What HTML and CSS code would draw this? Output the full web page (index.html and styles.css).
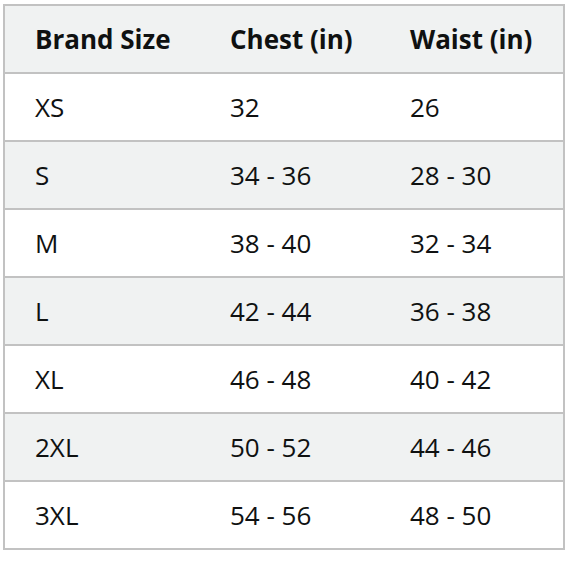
FILE: index.html
```html
<!DOCTYPE html>
<html>
<head>
<meta charset="utf-8">
<link rel="stylesheet" href="styles.css">
</head>
<body>
<table class="size-table">
  <thead>
    <tr><th class="c1">Brand Size</th><th class="c2">Chest (in)</th><th class="c3">Waist (in)</th></tr>
  </thead>
  <tbody>
    <tr><td>XS</td><td>32</td><td>26</td></tr>
    <tr><td>S</td><td>34 - 36</td><td>28 - 30</td></tr>
    <tr><td>M</td><td>38 - 40</td><td>32 - 34</td></tr>
    <tr><td>L</td><td>42 - 44</td><td>36 - 38</td></tr>
    <tr><td>XL</td><td>46 - 48</td><td>40 - 42</td></tr>
    <tr><td>2XL</td><td>50 - 52</td><td>44 - 46</td></tr>
    <tr><td>3XL</td><td>54 - 56</td><td>48 - 50</td></tr>
  </tbody>
</table>
</body>
</html>
```
FILE: styles.css
```css
html, body { margin: 0; padding: 0; background: #fff; }
body { padding: 4px 3px; }
.size-table {
  border-collapse: collapse;
  width: 562px;
  border: 2px solid #c2c2c2;
  font-family: "Open Sans", "Noto Sans", sans-serif;
  font-size: 26px;
  color: #0f1111;
  table-layout: fixed;
}
.size-table th, .size-table td {
  height: 66px;
  padding: 0 0 0 30px;
  text-align: left;
  vertical-align: middle;
  border-bottom: 2px solid #c2c2c2;
  box-sizing: content-box;
}
.size-table th { font-weight: 700; background: #f0f2f2; }
.c1 { width: 165px; }
.c2 { width: 150px; }
.size-table tbody tr:nth-child(even) td { background: #f0f2f2; }
```
